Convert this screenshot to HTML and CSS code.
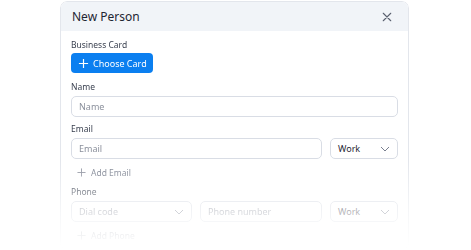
FILE: index.html
```html
<!DOCTYPE html>
<html lang="en">
  <head>
    <meta charset="UTF-8" />
    <title>New Person</title>
    <link rel="stylesheet" href="styles.css">
  </head>
  <body>
    <main class="modal">
      <header class="modal-header">
        <h1>New Person</h1>
        <button class="close" type="button" aria-label="Close">
          <svg width="10" height="10" viewBox="0 0 12 12"><path d="M1.5 1.5l9 9M10.5 1.5l-9 9" stroke="#5b6170" stroke-width="1.3" fill="none" stroke-linecap="round"/></svg>
        </button>
      </header>
      <form class="modal-body" autocomplete="off">
        <div class="field field-first">
          <label>Business Card</label>
          <button class="btn-primary" type="button">
            <svg width="11" height="11" viewBox="0 0 12 12"><path d="M6 1v10M1 6h10" stroke="#fff" stroke-width="1.3" fill="none"/></svg>
            Choose Card
          </button>
        </div>

        <div class="field field-name">
          <label for="name">Name</label>
          <input class="input" id="name" type="text" placeholder="Name" />
        </div>

        <div class="field">
          <label for="email">Email</label>
          <div class="row row-email">
            <input class="input" id="email" type="text" placeholder="Email" />
            <div class="select">Work
              <svg width="10" height="6" viewBox="0 0 10 6"><path d="M1 1l4 4 4-4" stroke="#7a8090" stroke-width="1" fill="none"/></svg>
            </div>
          </div>
          <div class="add-link">
            <svg width="9" height="9" viewBox="0 0 10 10"><path d="M5 0.5v9M0.5 5h9" stroke="#8a8f9c" stroke-width="1" fill="none"/></svg>
            Add Email
          </div>
        </div>

        <div class="field">
          <label for="phone">Phone</label>
          <div class="row row-phone">
            <div class="select placeholder">Dial code
              <svg width="10" height="6" viewBox="0 0 10 6"><path d="M1 1l4 4 4-4" stroke="#7a8090" stroke-width="1" fill="none"/></svg>
            </div>
            <input class="input" id="phone" type="text" placeholder="Phone number" />
            <div class="select">Work
              <svg width="10" height="6" viewBox="0 0 10 6"><path d="M1 1l4 4 4-4" stroke="#7a8090" stroke-width="1" fill="none"/></svg>
            </div>
          </div>
          <div class="add-link">
            <svg width="9" height="9" viewBox="0 0 10 10"><path d="M5 0.5v9M0.5 5h9" stroke="#8a8f9c" stroke-width="1" fill="none"/></svg>
            Add Phone
          </div>
        </div>
      </form>
    </main>
  </body>
</html>
```

FILE: styles.css
```css
body {
  margin: 0;
  background-color: #fff;
  font-family: "Noto Sans", Arial, sans-serif;
  color: #1f2633;
  overflow: hidden;
}

.modal {
  width: 347px;
  height: 247px;
  margin: 1px 0 0 60px;
  border: 1px solid #e3e6ec;
  border-radius: 7px;
  background-color: #fff;
  box-shadow: 0 2px 14px rgba(30, 40, 60, 0.08);
  overflow: hidden;
  -webkit-mask-image: linear-gradient(to bottom, #000 0, #000 160px, rgba(0, 0, 0, 0.35) 210px, rgba(0, 0, 0, 0.08) 238px, transparent 248px);
  mask-image: linear-gradient(to bottom, #000 0, #000 160px, rgba(0, 0, 0, 0.35) 210px, rgba(0, 0, 0, 0.08) 238px, transparent 248px);
}

.modal-header {
  height: 29px;
  padding: 0 16px 0 11px;
  display: flex;
  align-items: center;
  justify-content: space-between;
  background-color: #f1f4f8;
}

.modal-header h1 {
  margin: 0;
  font-size: 12px;
  font-weight: 400;
  color: #1f2633;
}

.close {
  border: none;
  background: none;
  padding: 0;
  display: flex;
}

.modal-body {
  padding: 0 10px;
  display: flex;
  flex-direction: column;
}

.field {
  display: flex;
  flex-direction: column;
  margin-top: 6px;
}

.field-first {
  margin-top: 8px;
}

.field-name {
  margin-top: 8px;
}

.field label {
  height: 12px;
  line-height: 12px;
  font-size: 8.5px;
  color: #3a4150;
  margin-bottom: 3px;
}

.field-first label {
  margin-bottom: 2px;
}

.btn-primary {
  align-self: flex-start;
  height: 20px;
  padding: 0 6px 0 7px;
  display: flex;
  align-items: center;
  gap: 4px;
  border: none;
  border-radius: 4px;
  background-color: #0b7ff0;
  color: #fff;
  font-family: inherit;
  font-size: 9px;
  font-weight: 400;
}

.input,
.select {
  box-sizing: border-box;
  height: 21px;
  border: 1px solid #d9dde5;
  border-radius: 5px;
  background-color: #fff;
  font-family: inherit;
  font-size: 9px;
  color: #1f2633;
}

.input {
  padding: 0 7px;
  width: 100%;
}

.input::placeholder,
.placeholder {
  color: #8b909c;
}

.select {
  padding: 0 7px;
  display: flex;
  align-items: center;
  justify-content: space-between;
}

.row {
  display: grid;
  gap: 8px;
}

.row-email {
  grid-template-columns: 1fr 68px;
}

.row-phone {
  grid-template-columns: 121px 1fr 68px;
}

.add-link {
  height: 20px;
  margin-top: 3px;
  padding-left: 6px;
  display: flex;
  align-items: center;
  gap: 5px;
  font-size: 8.5px;
  color: #7d8391;
}

.field:last-child label {
  margin-top: -2px;
}
```
